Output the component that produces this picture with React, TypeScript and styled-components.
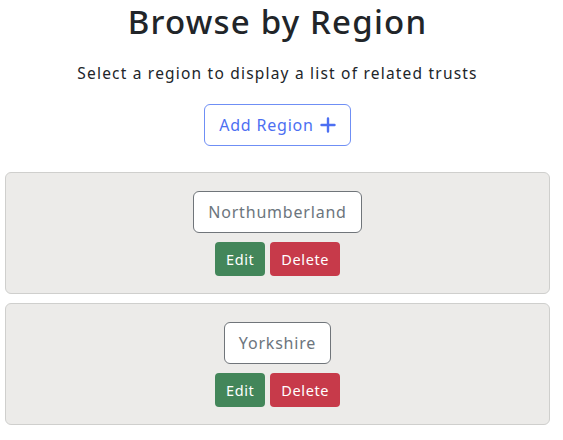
import React from "react";
import styled, { createGlobalStyle } from "styled-components";

const Global = createGlobalStyle`
  body {
    margin: 0;
    background: #ffffff;
    font-family: "Noto Sans", "Open Sans", sans-serif;
    color: #212529;
  }
`;

const Page = styled.div`
  width: 545px;
  margin-left: 5px;
  display: flex;
  flex-direction: column;
  align-items: center;
`;

const Title = styled.h1`
  margin: 0;
  padding-top: 2px;
  font-size: 33px;
  line-height: 40px;
  font-weight: 500;
  letter-spacing: 1.2px;
  color: #212529;
`;

const Subtitle = styled.p`
  margin: 20px 0 0;
  font-size: 15.5px;
  line-height: 22px;
  letter-spacing: 1.2px;
  color: #212529;
`;

const AddButton = styled.button`
  margin-top: 20px;
  height: 42px;
  padding: 0 14px;
  display: flex;
  align-items: center;
  gap: 6px;
  border: 1px solid #6f8ff5;
  border-radius: 6px;
  background: #ffffff;
  color: #4d6ff2;
  font-family: inherit;
  font-size: 16px;
  letter-spacing: 0.8px;
`;

const List = styled.div`
  margin-top: 26px;
  width: 100%;
  display: flex;
  flex-direction: column;
  gap: 9px;
`;

const Card = styled.div`
  box-sizing: border-box;
  height: 122px;
  background: #ecebe9;
  border: 1px solid #cfcfcd;
  border-radius: 6px;
  padding-top: 18px;
  display: flex;
  flex-direction: column;
  align-items: center;
`;

const NameBox = styled.div`
  box-sizing: border-box;
  height: 42px;
  padding: 0 14px;
  display: flex;
  align-items: center;
  background: #ffffff;
  border: 1px solid #70757a;
  border-radius: 6px;
  color: #6c757d;
  font-size: 16px;
  letter-spacing: 0.8px;
`;

const Actions = styled.div`
  margin-top: 9px;
  display: flex;
  gap: 5px;
`;

const ActionButton = styled.button<{ $variant: "edit" | "delete" }>`
  height: 34px;
  padding: 0 11px;
  border: none;
  border-radius: 4px;
  background: ${(p) => (p.$variant === "edit" ? "#43865a" : "#c73a4a")};
  color: #ffffff;
  font-family: inherit;
  font-size: 14.5px;
  letter-spacing: 0.6px;
`;

const Plus = () => (
  <svg width="16" height="16" viewBox="0 0 16 16">
    <path d="M8 1.5v13M1.5 8h13" stroke="#4d6ff2" strokeWidth="2.4" strokeLinecap="round" />
  </svg>
);

const regions = ["Northumberland", "Yorkshire"];

export default function App() {
  return (
    <>
      <Global />
      <Page>
        <Title>Browse by Region</Title>
        <Subtitle>Select a region to display a list of related trusts</Subtitle>
        <AddButton>
          Add Region <Plus />
        </AddButton>
        <List>
          {regions.map((r) => (
            <Card key={r}>
              <NameBox>{r}</NameBox>
              <Actions>
                <ActionButton $variant="edit">Edit</ActionButton>
                <ActionButton $variant="delete">Delete</ActionButton>
              </Actions>
            </Card>
          ))}
        </List>
      </Page>
    </>
  );
}
